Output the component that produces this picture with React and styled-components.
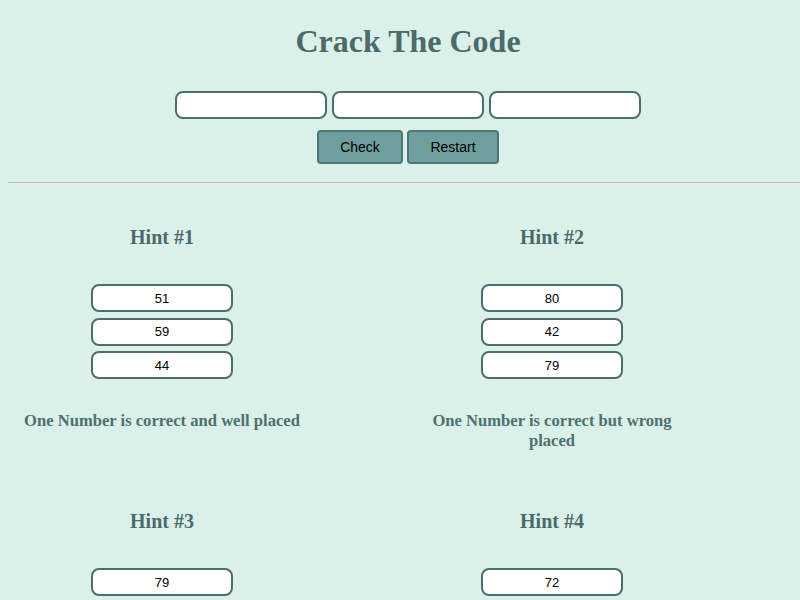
import React from "react";
import styled, { createGlobalStyle } from "styled-components";

const Global = createGlobalStyle`
  html { scrollbar-width: none; }
  html::-webkit-scrollbar, body::-webkit-scrollbar { display: none; }
  body {
    margin: 8px 0 8px 8px;
    background: #daf0e8;
    font-family: "Liberation Serif", "Times New Roman", serif;
  }
`;

const Page = styled.div`
  width: 800px;
`;

const Header = styled.header`
  display: flex;
  flex-direction: column;
  align-items: center;
`;

const Title = styled.h1`
  margin: 15px 0 0;
  font-size: 32px;
  line-height: 37px;
  font-weight: bold;
  color: #4b6b6b;
`;

const GuessRow = styled.div`
  display: flex;
  gap: 5px;
  margin-top: 31px;
`;

const GuessInput = styled.input`
  box-sizing: border-box;
  width: 152px;
  height: 28px;
  border: 2px solid #4d6e6e;
  border-radius: 8px;
  background: #fff;
  outline: none;
`;

const ButtonRow = styled.div`
  display: flex;
  gap: 4px;
  margin-top: 11px;
`;

const ActionButton = styled.button`
  box-sizing: border-box;
  width: ${(p) => p.$w}px;
  height: 34px;
  background: #6e9e9e;
  border: 2px solid #4f7676;
  border-radius: 4px;
  color: #000;
  font-family: "Liberation Sans", Arial, sans-serif;
  font-size: 14px;
  padding: 0;
`;

const Divider = styled.div`
  width: 100%;
  height: 0;
  margin-top: 18px;
  border-top: 1px solid #b9b9b9;
  border-bottom: 1px solid #e4ebe8;
`;

const HintGrid = styled.section`
  display: grid;
  grid-template-columns: 280px 280px;
  column-gap: 110px;
  row-gap: 58px;
  padding: 41px 0 40px 14px;
`;

const HintCard = styled.div`
  display: flex;
  flex-direction: column;
  align-items: center;
`;

const HintTitle = styled.h3`
  margin: 0;
  font-size: 20px;
  line-height: 24px;
  font-weight: bold;
  color: #4b6b6b;
`;

const HintNumbers = styled.div`
  display: flex;
  flex-direction: column;
  gap: 5.5px;
  margin-top: 35px;
`;

const NumberBox = styled.div`
  box-sizing: border-box;
  width: 142px;
  height: 28px;
  border: 2px solid #4d6e6e;
  border-radius: 8px;
  background: #fff;
  display: flex;
  align-items: center;
  justify-content: center;
  font-family: "Liberation Sans", Arial, sans-serif;
  font-size: 13px;
  color: #000;
`;

const HintText = styled.p`
  margin: 32px 0 0;
  font-size: 16.6px;
  line-height: 20px;
  font-weight: bold;
  text-align: center;
  color: #4f7171;
`;

const hints = [
  { n: [51, 59, 44], t: "One Number is correct and well placed" },
  { n: [80, 42, 79], t: "One Number is correct but wrong placed" },
  { n: [79, 15, 51], t: "Two Numbers are correct but wrong placed" },
  { n: [72, 53, 88], t: "Nothing is correct" },
];

export default function App() {
  return (
    <Page>
      <Global />
      <Header>
        <Title>Crack The Code</Title>
        <GuessRow>
          <GuessInput />
          <GuessInput />
          <GuessInput />
        </GuessRow>
        <ButtonRow>
          <ActionButton $w={86}>Check</ActionButton>
          <ActionButton $w={92}>Restart</ActionButton>
        </ButtonRow>
      </Header>
      <Divider />
      <HintGrid>
        {hints.map((h, i) => (
          <HintCard key={i}>
            <HintTitle>Hint #{i + 1}</HintTitle>
            <HintNumbers>
              {h.n.map((v, j) => (
                <NumberBox key={j}>{v}</NumberBox>
              ))}
            </HintNumbers>
            <HintText>{h.t}</HintText>
          </HintCard>
        ))}
      </HintGrid>
    </Page>
  );
}
